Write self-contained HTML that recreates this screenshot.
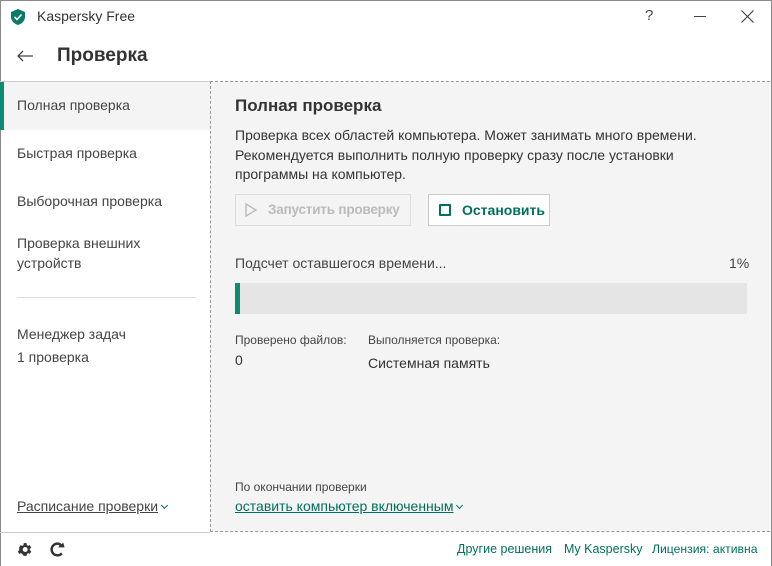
<!DOCTYPE html>
<html><head><meta charset="utf-8"><style>
*{margin:0;padding:0;box-sizing:border-box}
body{width:772px;height:566px;background:#fff;font-family:"Segoe UI","Liberation Sans","Noto Sans CJK SC",sans-serif;color:#333;position:relative;overflow:hidden}
.win{position:absolute;left:0;top:0;width:772px;height:566px;border:1px solid #8a8a8a;border-bottom:none}
.a{position:absolute;white-space:nowrap}
.g{color:#00705e}
.main{position:absolute;left:210px;top:81px;width:560px;height:451px;background:#f4f4f4;border:1px dashed #999;border-right:none}
.sb{font-size:14px;color:#444}
.chev{display:inline-block;width:5px;height:5px;border-right:1.2px solid #00705e;border-bottom:1.2px solid #00705e;transform:rotate(45deg);margin-left:4px;vertical-align:3px}
</style></head><body>
<div class="win"></div>
<svg class="a" style="left:11px;top:9px" width="14" height="16" viewBox="0 0 14 16"><path d="M7 0L14 3V8C14 12 10.5 15 7 16C3.5 15 0 12 0 8V3Z" fill="#0b7a66"/><path d="M3.5 8L6 10.5L10.5 5.5" stroke="#fff" stroke-width="1.6" fill="none"/></svg>
<div class="a" style="left:37px;top:8px;font-size:14px;color:#333">Kaspersky Free</div>
<div class="a" style="left:645px;top:7px;font-size:15px;color:#444">?</div>
<div class="a" style="left:694px;top:16px;width:12px;height:1px;background:#444"></div>
<svg class="a" style="left:741px;top:10px" width="13" height="13"><path d="M0.5 0.5L12.5 12.5M12.5 0.5L0.5 12.5" stroke="#444" stroke-width="1.2"/></svg>
<svg class="a" style="left:17px;top:50px" width="16" height="12"><path d="M16 6H1M6 1L1 6L6 11" stroke="#444" stroke-width="1.3" fill="none"/></svg>
<div class="a" style="left:57px;top:45px;font-size:19px;color:#333;font-weight:600">Проверка</div>
<div class="a" style="left:0;top:81px;width:210px;height:1px;background:#ccc"></div>
<div class="a" style="left:0;top:82px;width:210px;height:48px;background:#f4f4f4;border-left:4px solid #0b8a74"></div>
<div class="a sb g" style="left:17px;top:97px">Полная проверка</div>
<div class="a sb" style="left:17px;top:145px">Быстрая проверка</div>
<div class="a sb" style="left:17px;top:193px">Выборочная проверка</div>
<div class="a sb" style="left:17px;top:233px;line-height:20px">Проверка внешних<br>устройств</div>
<div class="a" style="left:17px;top:297px;width:179px;height:1px;background:#ddd"></div>
<div class="a sb" style="left:17px;top:326px">Менеджер задач</div>
<div class="a sb" style="left:17px;top:349px">1 проверка</div>
<div class="a sb g" style="left:17px;top:498px"><span style="text-decoration:underline">Расписание проверки</span><span class="chev"></span></div>
<div class="main"></div>
<div class="a" style="left:235px;top:96px;font-size:17px;font-weight:600;color:#333">Полная проверка</div>
<div class="a" style="left:235px;top:126px;font-size:14px;line-height:19.5px;color:#333">Проверка всех областей компьютера. Может занимать много времени.<br>Рекомендуется выполнить полную проверку сразу после установки<br>программы на компьютер.</div>
<div class="a" style="left:235px;top:194px;width:176px;height:32px;border:1px solid #ddd;color:#bbb;font-size:13.5px;font-weight:600;padding:7px 0 0 32px;letter-spacing:-0.2px">Запустить проверку</div>
<svg class="a" style="left:245px;top:203px" width="12" height="14"><path d="M1 1L11 7L1 13Z" stroke="#bbb" stroke-width="1.4" fill="none"/></svg>
<div class="a" style="left:428px;top:194px;width:122px;height:32px;border:1px solid #ccc;background:#fff;color:#00705e;font-size:14px;font-weight:600;padding:7px 0 0 33px">Остановить</div>
<div class="a" style="left:439px;top:204px;width:12px;height:12px;border:2px solid #00705e;border-radius:1px"></div>
<div class="a" style="left:235px;top:255px;font-size:14px;color:#444">Подсчет оставшегося времени...</div>
<div class="a" style="left:729px;top:255px;font-size:14px;color:#444">1%</div>
<div class="a" style="left:235px;top:283px;width:512px;height:31px;background:#e5e5e5;border-left:5px solid #0b8a74"></div>
<div class="a" style="left:235px;top:333px;font-size:12px;color:#444">Проверено файлов:</div>
<div class="a" style="left:235px;top:352px;font-size:14px;color:#333">0</div>
<div class="a" style="left:368px;top:333px;font-size:12px;color:#444">Выполняется проверка:</div>
<div class="a" style="left:368px;top:355px;font-size:14px;color:#333">Системная память</div>
<div class="a" style="left:235px;top:480px;font-size:12px;color:#444">По окончании проверки</div>
<div class="a g" style="left:235px;top:498px;font-size:14px"><span style="text-decoration:underline">оставить компьютер включенным</span><span class="chev"></span></div>
<div class="a" style="left:0;top:532px;width:210px;height:1px;background:#ccc"></div>
<svg class="a" style="left:16px;top:541px" width="17" height="17" viewBox="0 0 24 24"><path fill="#333" d="M19.4 13a7.5 7.5 0 000-2l2.1-1.6-2-3.5-2.5 1a7 7 0 00-1.7-1L15 3h-4l-.4 2.9a7 7 0 00-1.7 1l-2.5-1-2 3.5L4.6 11a7.5 7.5 0 000 2l-2.1 1.6 2 3.5 2.5-1a7 7 0 001.7 1L11 21h4l.4-2.9a7 7 0 001.7-1l2.5 1 2-3.5zM13 15.5A3.5 3.5 0 1113 8.5a3.5 3.5 0 010 7z"/></svg>
<svg class="a" style="left:49px;top:541px" width="17" height="17" viewBox="0 0 24 24"><path fill="#333" d="M12 2C6.5 2 2 6.5 2 12s4.5 10 10 10c3 0 5.5-1.3 7.3-3.3L17 16c-1.2 1.5-3 2.5-5 2.5-3.6 0-6.5-2.9-6.5-6.5S8.4 5.5 12 5.5c1 0 2 .2 2.8.6L13 9h9l-2-7-2 2.5C16.3 2.9 14.3 2 12 2z"/></svg>
<div class="a g" style="left:457px;top:542px;font-size:12.5px">Другие решения</div>
<div class="a g" style="left:564px;top:542px;font-size:12.5px">My Kaspersky</div>
<div class="a g" style="left:652px;top:542px;font-size:12.2px">Лицензия: активна</div>
</body></html>
